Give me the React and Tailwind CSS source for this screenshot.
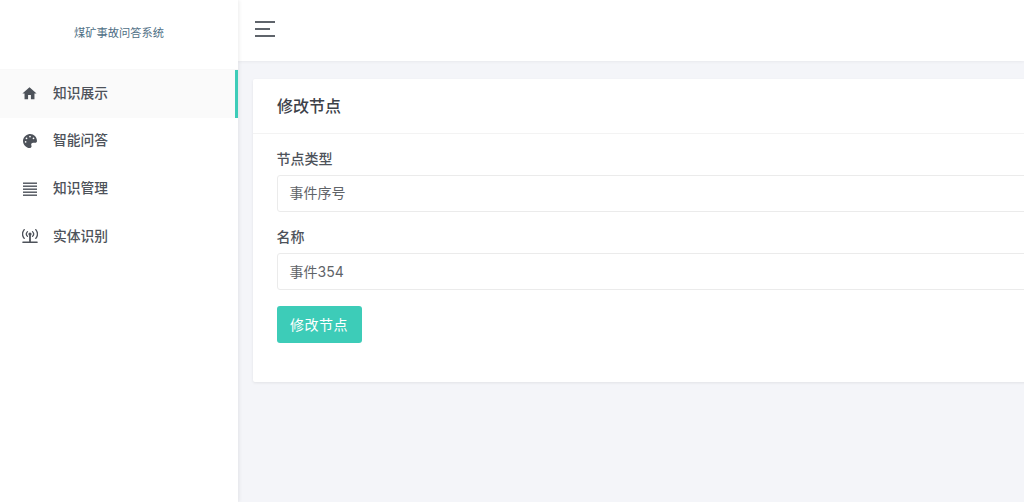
import React from "react";
import { FaPalette } from "react-icons/fa";
import { MdHome } from "react-icons/md";

const F = "font-['Inter','Noto_Sans_CJK_SC',sans-serif]";

function Lines() {
  return (
    <svg width="16" height="16" viewBox="0 0 16 16" className="text-[#4d525a]">
      {[1.5, 4.5, 7.5, 10.5, 13.5].map((y) => (
        <rect key={y} x="1" y={y} width="14" height="1.4" fill="currentColor" />
      ))}
    </svg>
  );
}

function Tower() {
  return (
    <svg width="16" height="16" viewBox="0 0 16 16" fill="none" stroke="#4d525a" strokeWidth="1.3" strokeLinecap="round">
      <circle cx="8" cy="6" r="1.6" fill="#4d525a" stroke="none" />
      <path d="M8 7v6.5" strokeWidth="1.8" />
      <path d="M1 14.2h14" strokeWidth="1.6" />
      <path d="M5.5 3.6a3.4 3.4 0 0 0 0 4.8M10.5 3.6a3.4 3.4 0 0 1 0 4.8" />
      <path d="M2.2 1.6a7.2 7.2 0 0 0 0 8.8M13.8 1.6a7.2 7.2 0 0 1 0 8.8" />
    </svg>
  );
}

const items = [
  { label: "知识展示", icon: <MdHome size={17} className="shrink-0 text-[#4d525a]" />, active: true, pad: "pb-[1px]" },
  { label: "智能问答", icon: <FaPalette size={14} className="text-[#4d525a]" />, pad: "pb-[1px]" },
  { label: "知识管理", icon: <Lines />, pad: "" },
  { label: "实体识别", icon: <Tower />, pad: "" },
];

export default function App() {
  return (
    <div className={`${F} flex h-[502px] w-[1024px] overflow-hidden bg-[#f4f5f9]`}>
      <aside className="z-10 flex w-[238px] shrink-0 flex-col bg-white shadow-[1px_0_4px_rgba(0,0,0,0.08)]">
        <div className="flex h-[70px] items-center justify-center border-b border-[#f8f8f8] pb-[2px] text-[11.25px] text-[#4f6f85]">
          煤矿事故问答系统
        </div>
        <nav className="flex flex-col">
          {items.map((it) => (
            <div
              key={it.label}
              className={`flex h-[47.5px] items-center border-r-[3px] pl-[21.5px] ${it.pad} ${it.active ? "border-[#3dccb8] bg-[#fafafa]" : "border-transparent"}`}
            >
              <span className="flex w-[16px] items-center justify-center">{it.icon}</span>
              <span className="ml-[15.5px] text-[13.75px] font-medium text-[#4d525a]">{it.label}</span>
            </div>
          ))}
        </nav>
      </aside>
      <main className="flex min-w-0 flex-1 flex-col">
        <header className="flex h-[61px] shrink-0 items-center bg-white pl-[17px] shadow-[0_1px_3px_rgba(0,0,0,0.05)]">
          <div className="flex flex-col gap-[5px] pb-[4px]">
            <span className="block h-[2px] w-[20px] bg-[#5f646b]" />
            <span className="block h-[2px] w-[15px] bg-[#5f646b]" />
            <span className="block h-[2px] w-[20px] bg-[#5f646b]" />
          </div>
        </header>
        <section className="pl-[15px] pt-[18px]">
          <div className="h-[303px] w-[900px] rounded-[2px] bg-white shadow-[0_1px_3px_rgba(0,0,0,0.08)]">
            <div className="flex h-[55px] items-center border-b border-[#f3f3f3] pl-[24px] text-[16px] font-medium text-[#3c4149]">
              修改节点
            </div>
            <div className="pl-[23.5px] pr-[24px] pt-[15px]">
              <label className="block text-[14px] font-medium leading-[20px] text-[#4d525a]">节点类型</label>
              <div className="mt-[6px] flex h-[37px] items-center rounded-[3px] border border-[#ebebeb] pl-[12px] pb-[2px] text-[14px] text-[#5f6368]">事件序号</div>
              <label className="mt-[15px] block text-[14px] font-medium leading-[20px] text-[#4d525a]">名称</label>
              <div className="mt-[6px] flex h-[37px] items-center rounded-[3px] border border-[#ebebeb] pl-[12px] pb-[1px] text-[14px] text-[#5f6368]">事件354</div>
              <button className="mt-[16px] flex h-[37px] w-[85px] items-center justify-center rounded-[3px] bg-[#3dccb8] pb-[1px] text-[14px] tracking-[0.5px] text-white">修改节点</button>
            </div>
          </div>
        </section>
      </main>
    </div>
  );
}
